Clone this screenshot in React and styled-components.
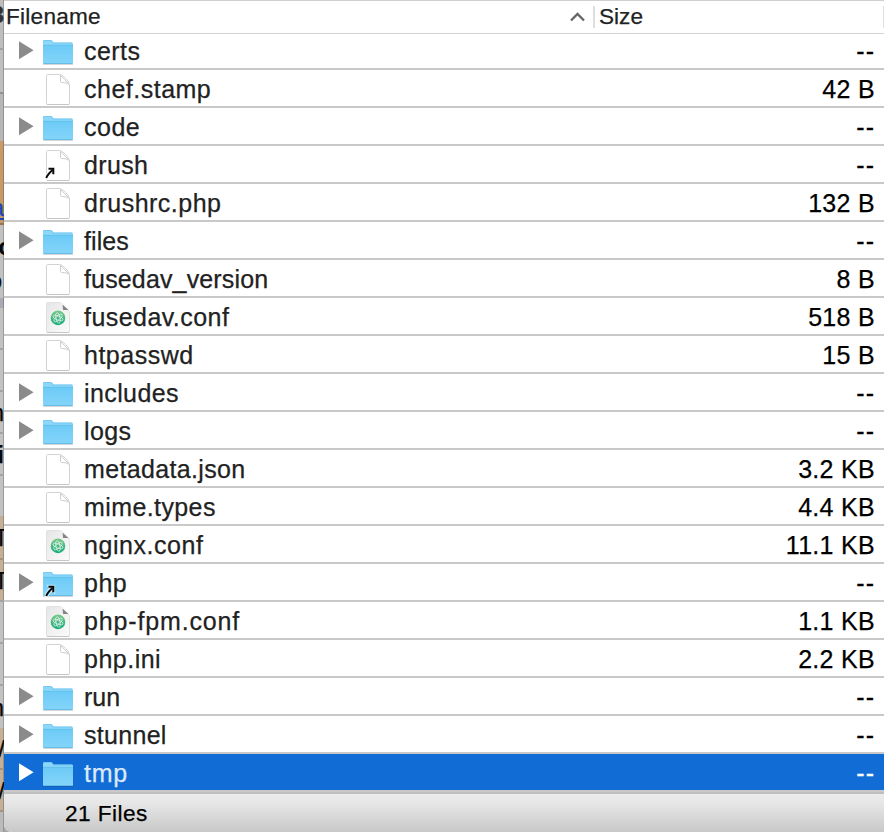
import React from "react";
import styled, { createGlobalStyle } from "styled-components";

const GlobalStyle = createGlobalStyle`
  * { box-sizing: border-box; }
  body {
    margin: 0;
    overflow: hidden;
    font-family: "Liberation Sans", Arial, sans-serif;
    color: #222;
    -webkit-text-stroke: 0.25px currentColor;
  }
`;

const Screen = styled.div`
  display: flex;
  width: 884px;
  height: 832px;
  overflow: hidden;
  background: #a8a8a8;
`;

const Backdrop = styled.div`
  display: flex;
  flex-direction: column;
  flex: none;
  width: 4px;
  height: 832px;
  overflow: hidden;
`;

const Slice = styled.div`
  display: flex;
  flex: none;
  align-items: ${(p) => p.$align || "center"};
  justify-content: flex-end;
  height: ${(p) => p.$height}px;
  overflow: hidden;
  border-bottom: ${(p) => (p.$line ? `2px solid ${p.$line}` : "0")};
  background: ${(p) => p.$fill};
  box-shadow: inset -1px 0 0 rgba(0, 0, 0, 0.2);
`;

const Glyph = styled.span`
  flex: none;
  padding-top: 2px;
  margin-right: ${(p) => p.$overhang || 0}px;
  color: ${(p) => p.$color || "#080808"};
  font-size: 24px;
  font-weight: ${(p) => (p.$bold ? 700 : 400)};
  line-height: 26px;
  text-decoration: ${(p) => (p.$link ? "underline" : "none")};
`;

const Panel = styled.main`
  display: flex;
  flex-direction: column;
  width: 880px;
  height: 832px;
  background: #fff;
  border-bottom-left-radius: 8px;
  overflow: hidden;
`;

const Header = styled.header`
  display: flex;
  flex: none;
  align-items: center;
  height: 34px;
  border-top: 1px solid #cfcfcf;
  border-bottom: 1px solid #d2d2d2;
  font-size: 22.6px;
  letter-spacing: 0.25px;
  line-height: 30px;
`;

const NameHeading = styled.div`
  display: flex;
  align-items: center;
  justify-content: space-between;
  width: 591px;
  height: 22px;
  padding: 0 8px 0 2px;
  border-right: 2px solid #dedede;
`;

const SortArrow = styled.svg`
  width: 15px;
  height: 10px;
  margin-bottom: 1px;
`;

const SizeHeading = styled.div`
  display: flex;
  align-items: center;
  flex: 1;
  height: 22px;
  padding-left: 4px;
  border-right: 1px solid #dedede;
  letter-spacing: 0;
`;

const Rows = styled.div`
  flex: none;
  height: 758px;
`;

const Row = styled.div`
  display: flex;
  align-items: center;
  height: ${(p) => (p.$first ? 36 : 38)}px;
  padding: ${(p) => (p.$first ? 0 : 2)}px 9px 0 0;
  border-bottom: 2px solid #c9c9c9;
  background: ${(p) => (p.$selected ? "#116cd6" : "#fff")};
  color: ${(p) => (p.$selected ? "#dce9fb" : "#222")};
`;

const Disclosure = styled.div`
  display: flex;
  width: 38px;
  height: 34px;
  padding: 7px 0 0 15px;
`;

const IconCell = styled.div`
  width: 42px;
  height: 34px;
`;

const Name = styled.span`
  flex: 1;
  height: 34px;
  font-size: 25px;
  letter-spacing: ${(p) => p.$spacing}px;
  line-height: 35px;
  white-space: pre;
`;

const Size = styled.span`
  height: 34px;
  color: ${(p) => (p.$selected ? "#fff" : "#000")};
  font-size: 25px;
  letter-spacing: ${(p) => (p.$dashes ? 1 : 0.3)}px;
  line-height: 35px;
  white-space: pre;
`;

const Footer = styled.footer`
  flex: none;
  height: 40px;
  padding: 2px 0 0 61px;
  border-top: 2px solid #bfbfbf;
  background: linear-gradient(#ececec, #e6e6e6 25%, #c8c8c8);
  color: #000;
  font-size: 22.6px;
  letter-spacing: 0.45px;
  line-height: 35px;
`;

const arrowShape =
  "M6.300 19.800H12.200V26.200L10.200 24.200C8 26 6.200 28 5 30.800L3.500 30.300C4 27 5.800 24.500 8.200 22.300z";

const ShortcutArrow = () => (
  <g>
    <path d={arrowShape} fill="#fff" stroke="#fff" strokeWidth="2" opacity=".55" />
    <path d="M4.300 30C5.200 27 7.500 24.700 10.500 22" fill="none" stroke="#0b0b0b" strokeWidth="1.900" />
    <path d="M6.500 20.800H11.300V26.200" fill="none" stroke="#0b0b0b" strokeWidth="2" />
  </g>
);

const FolderIcon = ({ link }) => (
  <svg width="34" height="34" viewBox="0 0 34 34" display="block">
    <defs>
      <linearGradient id="folderFace" x1="0" y1="0" x2="0" y2="1">
        <stop offset="0" stopColor="#6ccbf7" />
        <stop offset="1" stopColor="#84d4f9" />
      </linearGradient>
    </defs>
    <path d="M1 30.500h30" stroke="#000" strokeOpacity=".14" />
    <path d="M1 10V7.400Q1 6 2.400 6H8.800q.9 0 1.400.7l1.400 1.800H29.600Q31 8.500 31 9.800V12H1z" fill="#8cd7fa" />
    <path d="M1.500 8V7.500Q1.500 6.500 2.500 6.500H8.700q.7 0 1.100.6l1.500 1.900H30" fill="none" stroke="#68bfe8" strokeWidth=".7" />
    <path d="M1 11H31V28.800Q31 30 29.800 30H2.200Q1 30 1 28.800z" fill="url(#folderFace)" />
    <path d="M1 11.300H31" stroke="#5fbfeb" strokeWidth=".8" />
    <path d="M1.500 29.600H30.500" stroke="#5cb4dd" strokeWidth=".8" />
    {link && <ShortcutArrow />}
  </svg>
);

const FileIcon = ({ link, atom }) => (
  <svg width="34" height="34" viewBox="0 0 34 34" display="block">
    <defs>
      <linearGradient id="badge" x1="0" y1="0" x2="0" y2="1">
        <stop offset="0" stopColor="#7bc98a" />
        <stop offset="1" stopColor="#14a978" />
      </linearGradient>
      <linearGradient id="sheet" x1="0" y1="0" x2="1" y2="1">
        <stop offset="0" stopColor="#e6e6e6" />
        <stop offset="1" stopColor="#fbfbfb" />
      </linearGradient>
    </defs>
    <path
      d="M5.500 2.500H17.500C21 2.800 27.200 9.300 27.500 13V31.300Q27.500 32.500 26.300 32.500H5.700Q4.500 32.500 4.500 31.300V3.500Q4.500 2.500 5.500 2.500z"
      fill={atom ? "url(#sheet)" : "#fff"}
      stroke={atom ? "#e0e0e0" : "#d2d2d2"}
    />
    <path d="M5 32.500H27" stroke="#c6c6c6" />
    {atom ? (
      <>
        <path d="M18.500 2.800Q21 5 20.700 10H27C25.500 7.500 22 3.500 18.500 2.800z" fill="#fafafa" />
        <path d="M20.500 4.500L26.500 10H21z" fill="#858585" />
        <circle cx="16" cy="17.900" r="7.300" fill="url(#badge)" />
        <g fill="none" stroke="#fff" strokeWidth=".8" opacity=".8">
          <ellipse cx="16" cy="18" rx="2" ry="5.300" transform="rotate(-10 16 18)" />
          <ellipse cx="16" cy="18" rx="2" ry="5.300" transform="rotate(50 16 18)" />
          <ellipse cx="16" cy="18" rx="2" ry="5.300" transform="rotate(110 16 18)" />
        </g>
      </>
    ) : (
      <path d="M18.500 3V9.300Q18.500 10.500 19.700 10.500Q24 10.300 26.700 12.200M18.500 3.500L26.500 11.500" fill="none" stroke="#c9c9c9" strokeWidth=".9" />
    )}
    {link && <ShortcutArrow />}
  </svg>
);

const GREY = "#c3c2c0";
const TAN = "#c4b099";
const GREY_LINE = "#a4a3a2";
const TAN_LINE = "#a39482";

const slices = [
  { height: 50, fill: "#bfbebc", line: "#a2a2a2", align: "flex-start", glyph: "3", bold: true, color: "#333" },
  { height: 44, fill: "#c0bfbd", line: "#929292" },
  { height: 47, fill: "#b8b7b6" },
  { height: 50, fill: "#c59b6b" },
  { height: 34, fill: "#c59b6b", line: "#96744e", glyph: "a", link: true, color: "#1b46b5" },
  { height: 41, fill: GREY, glyph: "o", bold: true, overhang: -9 },
  { height: 32, fill: GREY, glyph: "o", overhang: 2, align: "flex-start" },
  { height: 10, fill: "#aaabb2" },
  { height: 42, fill: GREY, line: GREY_LINE },
  { height: 42, fill: GREY, line: GREY_LINE },
  { height: 42, fill: GREY, line: GREY_LINE, glyph: "n" },
  { height: 42, fill: GREY, line: GREY_LINE, glyph: "i", bold: true },
  { height: 40, fill: GREY },
  { height: 44, fill: TAN, line: TAN_LINE, glyph: "T", overhang: -4.5 },
  { height: 42, fill: TAN, line: GREY_LINE, glyph: "T", overhang: -4.5 },
  { height: 42, fill: GREY, line: GREY_LINE },
  { height: 42, fill: GREY, line: GREY_LINE },
  { height: 42, fill: GREY, glyph: "n" },
  { height: 42, fill: TAN, line: TAN_LINE, glyph: "/", overhang: -1 },
  { height: 42, fill: TAN, line: TAN_LINE, glyph: "/", overhang: -1 },
  { height: 20, fill: "#bbb" },
];

const files = [
  { name: "certs", size: "--", folder: true, spacing: 0.45 },
  { name: "chef.stamp", size: "42 B", spacing: 0.5 },
  { name: "code", size: "--", folder: true, spacing: 0.5 },
  { name: "drush", size: "--", link: true, spacing: 0.35 },
  { name: "drushrc.php", size: "132 B", spacing: 0.5 },
  { name: "files", size: "--", folder: true, spacing: 0.1 },
  { name: "fusedav_version", size: "8 B", spacing: 0.15 },
  { name: "fusedav.conf", size: "518 B", atom: true, spacing: 0.45 },
  { name: "htpasswd", size: "15 B", spacing: 0.5 },
  { name: "includes", size: "--", folder: true, spacing: 0.4 },
  { name: "logs", size: "--", folder: true, spacing: 0.4 },
  { name: "metadata.json", size: "3.2 KB", spacing: 0.35 },
  { name: "mime.types", size: "4.4 KB", spacing: 0.4 },
  { name: "nginx.conf", size: "11.1 KB", atom: true, spacing: 0.55 },
  { name: "php", size: "--", folder: true, link: true, spacing: 0.5 },
  { name: "php-fpm.conf", size: "1.1 KB", atom: true, spacing: 0.85 },
  { name: "php.ini", size: "2.2 KB", spacing: 0.5 },
  { name: "run", size: "--", folder: true, spacing: 0 },
  { name: "stunnel", size: "--", folder: true, spacing: 0.3 },
  { name: "tmp", size: "--", folder: true, selected: true, spacing: 0.8 },
];

const FileRow = ({ file, first }) => (
  <Row $first={first} $selected={file.selected}>
    <Disclosure>
      {file.folder && (
        <svg width="15" height="19" viewBox="0 0 15 19">
          <path d="M0 .2L14.600 9.200L0 18.200z" fill={file.selected ? "#fff" : "#8b8b8b"} />
        </svg>
      )}
    </Disclosure>
    <IconCell>
      {file.folder ? <FolderIcon link={file.link} /> : <FileIcon link={file.link} atom={file.atom} />}
    </IconCell>
    <Name $spacing={file.spacing}>{file.name}</Name>
    <Size $selected={file.selected} $dashes={file.size === "--"}>{file.size}</Size>
  </Row>
);

export default function App() {
  return (
    <>
      <GlobalStyle />
      <Screen>
        <Backdrop aria-hidden="true">
          {slices.map((s, i) => (
            <Slice key={i} $height={s.height} $fill={s.fill} $line={s.line} $align={s.align}>
              {s.glyph && (
                <Glyph $overhang={s.overhang} $bold={s.bold} $link={s.link} $color={s.color}>
                  {s.glyph}
                </Glyph>
              )}
            </Slice>
          ))}
        </Backdrop>
        <Panel>
          <Header>
            <NameHeading>
              Filename
              <SortArrow viewBox="0 0 15 10">
                <path d="M1 8.500L7.500 2L14 8.500" fill="none" stroke="#666" strokeWidth="2.300" />
              </SortArrow>
            </NameHeading>
            <SizeHeading>Size</SizeHeading>
          </Header>
          <Rows>
            {files.map((file, i) => (
              <FileRow key={file.name} file={file} first={i === 0} />
            ))}
          </Rows>
          <Footer>21 Files</Footer>
        </Panel>
      </Screen>
    </>
  );
}
